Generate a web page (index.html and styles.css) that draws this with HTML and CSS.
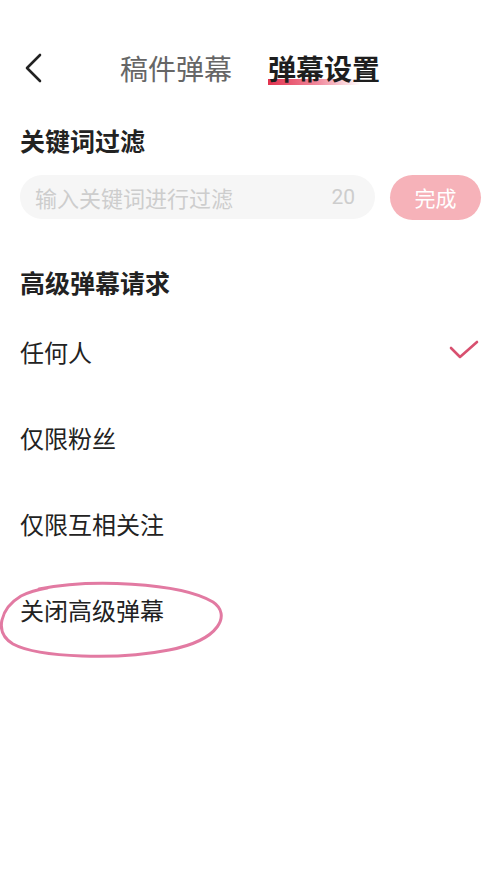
FILE: index.html
```html
<!DOCTYPE html>
<html lang="zh-CN">
<head>
<meta charset="utf-8">
<link rel="stylesheet" href="styles.css">
</head>
<body>
<div class="page">
  <header class="topbar">
    <div class="back">
      <svg width="24" height="32" viewBox="0 0 24 32"><path d="M18 3 L5 16 L18 29" fill="none" stroke="#222" stroke-width="2.6" stroke-linecap="round" stroke-linejoin="round"/></svg>
    </div>
    <div class="tabs">
      <span class="tab">稿件弹幕</span>
      <span class="tab active">弹幕设置</span>
    </div>
  </header>

  <h2 class="section-title first">关键词过滤</h2>
  <div class="filter-row">
    <div class="input">
      <span class="placeholder">输入关键词进行过滤</span>
      <span class="count">20</span>
    </div>
    <div class="done">完成</div>
  </div>

  <h2 class="section-title second">高级弹幕请求</h2>
  <ul class="options">
    <li class="option">
      <span>任何人</span>
      <svg class="check" width="30" height="22" viewBox="0 0 30 22"><path d="M2 8 L11 17 L28 2" fill="none" stroke="#d8506f" stroke-width="2.6" stroke-linecap="round" stroke-linejoin="round"/></svg>
    </li>
    <li class="option"><span>仅限粉丝</span></li>
    <li class="option"><span>仅限互相关注</span></li>
    <li class="option circled">
      <span>关闭高级弹幕</span>
      <svg class="ring" width="230" height="80" viewBox="0 0 230 80"><path d="M40 9 C90 -1 180 2 214 22 C232 34 222 60 170 70 C120 80 40 78 14 64 C-6 52 2 28 22 16 C30 12 36 10 48 8" fill="none" stroke="#e27aa2" stroke-width="3" stroke-linecap="round"/></svg>
    </li>
  </ul>
</div>
</body>
</html>
```
FILE: styles.css
```css
* { box-sizing: border-box; }
html, body { margin: 0; padding: 0; background: #fff; }
body {
  font-family: "Noto Sans CJK SC", "Noto Sans", sans-serif;
  color: #222;
  width: 500px;
  height: 889px;
  overflow: hidden;
}
.page { padding: 33px 20px 0 20px; }

.topbar {
  display: flex;
  align-items: center;
  height: 70px;
}
.back { width: 24px; height: 32px; margin-left: 2px; display: flex; }
.tabs { display: flex; gap: 36px; margin-left: 74px; }
.tab {
  font-size: 28px;
  line-height: 40px;
  color: #666;
}
.tab.active {
  color: #1e1e1e;
  font-weight: 700;
  background: linear-gradient(to right, #e2334f 0%, rgba(236, 100, 125, 0.75) 55%, rgba(255, 220, 225, 0) 100%) no-repeat;
  background-size: 82% 6px;
  background-position: left 0 bottom 3px;
}

.section-title {
  margin: 0;
  font-size: 25px;
  line-height: 40px;
  font-weight: 700;
  color: #222;
}
.section-title.first { margin-top: 17px; }
.section-title.second { margin-top: 43px; }

.filter-row {
  display: flex;
  align-items: center;
  gap: 15px;
  margin-top: 15px;
  height: 44px;
}
.input {
  flex: 0 0 355px;
  height: 44px;
  border-radius: 22px;
  background: #f6f6f6;
  display: flex;
  align-items: center;
  justify-content: space-between;
  padding: 0 20px 0 15px;
  font-size: 22px;
  color: #cdcdcd;
}
.count { font-family: "Roboto", "Noto Sans", sans-serif; font-size: 21px; }
.done {
  flex: 0 0 91px;
  height: 45px;
  border-radius: 23px;
  background: #f6b2b9;
  color: #fff;
  font-size: 21px;
  display: flex;
  align-items: center;
  justify-content: center;
}

.options { list-style: none; margin: 6px 0 0 0; padding: 0; }
.option {
  height: 86px;
  display: flex;
  align-items: center;
  justify-content: space-between;
  font-size: 24px;
  color: #222;
}
.check { margin-right: 1px; }
.circled { position: relative; }
.ring {
  position: absolute;
  left: -21px;
  top: 14px;
}
```
